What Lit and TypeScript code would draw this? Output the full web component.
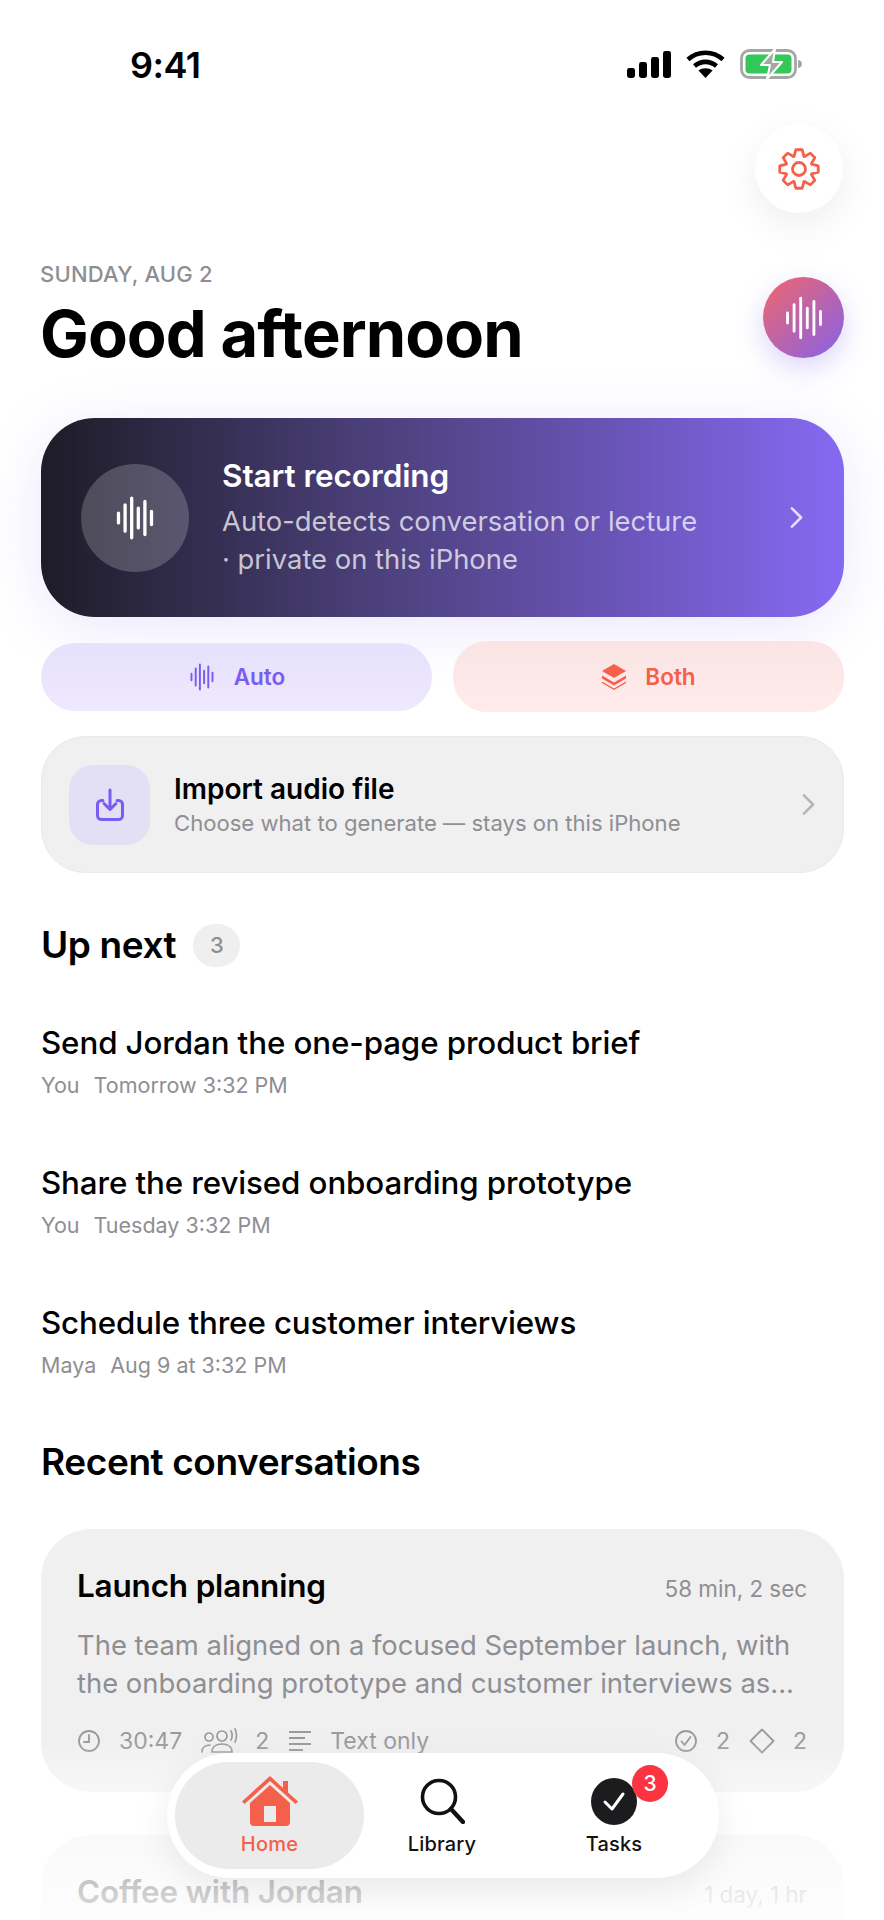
import { LitElement, html, css, svg } from 'lit';
import { customElement } from 'lit/decorators.js';

const wave = (size: number, stroke = 2) => html`
  <svg width=${size} height=${size} viewBox="0 0 40 40" fill="none" stroke="currentColor" stroke-width=${stroke} stroke-linecap="round">
    <path d="M5 15.500v9M11 8v24M17 2v36M23 11v18M29 5v30M35 14v12" />
  </svg>`;

const chevron = (w: number, h: number) => html`
  <svg width=${w} height=${h} viewBox="0 0 12 20" fill="none" stroke="currentColor" stroke-width="2.200" stroke-linecap="round" stroke-linejoin="round">
    <path d="M2 2l8 8-8 8" />
  </svg>`;

const UP_NEXT = [
  { title: 'Send Jordan the one-page product brief', who: 'You', when: 'Tomorrow 3:32 PM' },
  { title: 'Share the revised onboarding prototype', who: 'You', when: 'Tuesday 3:32 PM' },
  { title: 'Schedule three customer interviews', who: 'Maya', when: 'Aug 9 at 3:32 PM' },
];

@customElement('app-root')
export class AppRoot extends LitElement {
  static styles = css`
    :host {
      display: block;
      position: relative;
      width: 884px;
      height: 1920px;
      overflow: hidden;
      background: #fff;
      color: #000;
      font-family: Inter, "Noto Sans", sans-serif;
    }
    .status {
      height: 124px;
      display: flex;
      justify-content: space-between;
      align-items: flex-start;
      padding: 47px 82px 0 130px;
      box-sizing: border-box;
    }
    .time { font-size: 36px; font-weight: 600; line-height: 36px; letter-spacing: -0.5px; }
    .status-icons { display: flex; align-items: center; gap: 15px; padding-top: 2px; }
    .top { display: flex; justify-content: flex-end; padding: 0 41px; }
    .gear {
      width: 88px;
      height: 89px;
      border-radius: 50%;
      background: #fff;
      display: flex;
      align-items: center;
      justify-content: center;
      color: #f4604a;
      box-shadow: 0 12px 40px rgba(0, 0, 0, 0.07);
    }
    .hero {
      display: flex;
      justify-content: space-between;
      align-items: flex-start;
      padding: 48px 40px 0 40px;
      height: 205px;
      box-sizing: border-box;
    }
    .date { font-size: 22px; font-weight: 500; color: #8e8e93; line-height: 26px; letter-spacing: 0.2px; }
    h1 { margin: 9px 0 0; font-size: 65px; font-weight: 700; line-height: 76px; letter-spacing: -0.9px; }
    .mic {
      width: 81px;
      height: 81px;
      margin-top: 16px;
      border-radius: 50%;
      background: linear-gradient(135deg, #f1666a, #8562ea);
      display: flex;
      align-items: center;
      justify-content: center;
      color: #fff;
      box-shadow: 0 10px 28px rgba(130, 100, 235, 0.28);
    }
    .content { padding: 0 40px 0 41px; }
    .record {
      height: 199px;
      border-radius: 54px;
      background: linear-gradient(90deg, #1d1c27 0%, #4a3f78 40%, #6a55b8 72%, #8669f2 100%);
      box-shadow: 0 10px 60px rgba(130, 100, 240, 0.16);
      display: flex;
      align-items: center;
      padding: 0 40px;
      color: #fff;
      box-sizing: border-box;
    }
    .rec-circle {
      width: 108px;
      height: 108px;
      border-radius: 50%;
      background: rgba(255, 255, 255, 0.2);
      display: flex;
      align-items: center;
      justify-content: center;
      flex: none;
    }
    .rec-text { flex: 1; margin-left: 33px; }
    .rec-title { font-size: 31.5px; font-weight: 600; line-height: 38px; margin-bottom: 7px; letter-spacing: -0.1px; }
    .rec-sub { font-size: 27.4px; line-height: 38px; color: rgba(255, 255, 255, 0.72); width: 482px; }
    .rec-chev { color: rgba(255, 255, 255, 0.8); display: flex; }
    .modes { display: grid; grid-template-columns: 391px 391px; gap: 21px; margin-top: 24px; align-items: center; }
    .mode {
      border-radius: 34px;
      display: flex;
      align-items: center;
      justify-content: center;
      gap: 18px;
      font-size: 22.5px;
      font-weight: 600;
    }
    .auto { height: 68px; background: linear-gradient(180deg, #e6e1fc, #eee9fd); color: #7a5df0; }
    .both { height: 71px; background: linear-gradient(180deg, #fae4e5, #feecea); color: #f4604a; }
    .import {
      margin-top: 24px;
      height: 137px;
      border-radius: 44px;
      background: #f0f0f0;
      border: 1px solid #eaeaea;
      box-sizing: border-box;
      display: flex;
      align-items: center;
      padding: 0 27px 0 27px;
    }
    .imp-icon {
      width: 81px;
      height: 80px;
      border-radius: 24px;
      background: #e3e0f5;
      color: #7a5df0;
      display: flex;
      align-items: center;
      justify-content: center;
      flex: none;
    }
    .imp-text { flex: 1; margin-left: 24px; }
    .imp-title { font-size: 28px; font-weight: 600; line-height: 34px; }
    .imp-sub { font-size: 22.1px; line-height: 30px; color: #8e8e93; margin-top: 2px; }
    .imp-chev { color: #b5b5b8; display: flex; }
    .section { display: flex; align-items: center; gap: 17px; margin-top: 50px; height: 44px; }
    h2 { margin: 0; font-size: 37px; font-weight: 600; line-height: 44px; letter-spacing: -0.4px; }
    .count {
      width: 47px;
      height: 43px;
      border-radius: 22px;
      background: #efefef;
      color: #8e8e93;
      font-size: 22px;
      font-weight: 500;
      display: flex;
      align-items: center;
      justify-content: center;
    }
    .rows { margin-top: 56px; display: grid; row-gap: 64px; }
    .row-title { font-size: 31.3px; font-weight: 500; line-height: 40px; letter-spacing: -0.1px; }
    .row-sub { display: flex; gap: 14px; font-size: 21.5px; line-height: 28px; color: #8e8e93; margin-top: 8px; }
    .recent { margin-top: 61px; }
    .card {
      margin-top: 45px;
      height: 263px;
      border-radius: 50px;
      background: #f0f0f0;
      padding: 36px 37px 0 36px;
      box-sizing: border-box;
    }
    .card-head { display: flex; justify-content: space-between; align-items: baseline; }
    .card-title { font-size: 31.5px; font-weight: 600; line-height: 42px; letter-spacing: -0.2px; }
    .card-len { font-size: 22.4px; color: #8e8e93; }
    .card-body { font-size: 27.4px; line-height: 38px; color: #8e8e93; margin-top: 19px; }
    .card-foot {
      display: flex;
      align-items: center;
      gap: 19px;
      margin-top: 25px;
      font-size: 23px;
      line-height: 28px;
      color: #9a9a9e;
    }
    .stat { display: inline-flex; align-items: center; gap: 18px; }
    .stat.tight { gap: 16px; }
    .stat svg { flex: none; }
    .spacer { flex: 1; }
    .next-card { margin-top: 43px; }
    .fade {
      position: absolute;
      left: 0;
      right: 0;
      top: 1740px;
      height: 180px;
      background: linear-gradient(180deg, rgba(255, 255, 255, 0) 0%, rgba(255, 255, 255, 0.5) 28%, rgba(255, 255, 255, 0.8) 84%, rgba(255, 255, 255, 0.88) 100%);
      pointer-events: none;
    }
    .nav {
      position: absolute;
      left: 167px;
      top: 1753px;
      width: 552px;
      height: 125px;
      border-radius: 63px;
      background: #fff;
      box-shadow: 0 10px 36px rgba(0, 0, 0, 0.08);
    }
    .nav-inner { display: grid; grid-template-columns: 189px 156px 188px; height: 100%; padding-left: 8px; box-sizing: border-box; align-items: center; }
    .tab {
      height: 107px;
      display: flex;
      flex-direction: column;
      align-items: center;
      justify-content: flex-start;
      padding-top: 16px;
      box-sizing: border-box;
      font-size: 20px;
      font-weight: 500;
      color: #111;
      position: relative;
    }
    .tab svg { display: block; }
    .tab .label { position: absolute; top: 70px; line-height: 24px; letter-spacing: 0.2px; }
    .tab.active { background: #ebebeb; border-radius: 54px; color: #f4604a; padding-top: 14px; }
    .tab-check { position: relative; width: 46px; height: 47px; }
    .badge {
      position: absolute;
      left: 41px;
      top: -13px;
      width: 36px;
      height: 37px;
      border-radius: 50%;
      background: #fb3441;
      color: #fff;
      font-size: 21px;
      font-weight: 500;
      display: flex;
      align-items: center;
      justify-content: center;
    }
  `;

  private statusIcons() {
    return html`
      <div class="status-icons">
        <svg width="44" height="27" viewBox="0 0 44 27" fill="#000">
          <rect x="0" y="17" width="8" height="10" rx="2.400" />
          <rect x="12" y="11" width="8" height="16" rx="2.400" />
          <rect x="24" y="6" width="8" height="21" rx="2.400" />
          <rect x="36" y="0" width="8" height="27" rx="2.400" />
        </svg>
        <svg width="39" height="28" viewBox="0 0 39 28" fill="none" stroke="#000" stroke-width="4.600">
          <path d="M2 9.500C12 .5 27 .5 37 9.500" />
          <path d="M8.500 16c6.400-5.500 15.600-5.500 22 0" />
          <path d="M19.500 28l-7-7.500c4-3 10-3 14 0z" fill="#000" stroke="none" />
        </svg>
        <svg width="62" height="30" viewBox="0 0 62 30" fill="none">
          <rect x="1.500" y="1.500" width="54" height="27" rx="8" stroke="#a6a6a6" stroke-width="2.800" />
          <rect x="5.500" y="5.500" width="46" height="19" rx="4" fill="#34c759" />
          <path d="M58 11v8c2.200 0 4-2 4-4s-1.800-4-4-4z" fill="#a6a6a6" />
          <path d="M35 0L21 16h9l-3 14 15-17h-9z" fill="#a6a6a6" stroke="#fff" stroke-width="2" stroke-linejoin="round" />
        </svg>
      </div>`;
  }

  private gear() {
    const n = 8;
    const cx = 22;
    const cy = 22;
    // outline built from alternating outer and inner radii
    let d = '';
    for (let i = 0; i < n; i++) {
      const a = (i / n) * Math.PI * 2 - Math.PI / 2;
      const s = Math.PI / n;
      const pts = [
        [13.5, a - s * 0.95],
        [19.5, a - s * 0.42],
        [19.5, a + s * 0.42],
        [13.5, a + s * 0.95],
      ];
      for (const [r, t] of pts) {
        const x = (cx + r * Math.cos(t)).toFixed(2);
        const y = (cy + r * Math.sin(t)).toFixed(2);
        d += `${d ? 'L' : 'M'}${x} ${y}`;
      }
    }
    return html`
      <svg width="44" height="44" viewBox="0 0 44 44" fill="none" stroke="currentColor" stroke-width="2.800" stroke-linejoin="round">
        ${svg`<path d="${d}Z" />`}
        <circle cx="22" cy="22" r="6.500" />
      </svg>`;
  }

  render() {
    return html`
      <div class="status">
        <div class="time">9:41</div>
        ${this.statusIcons()}
      </div>
      <div class="top"><div class="gear">${this.gear()}</div></div>
      <div class="hero">
        <div>
          <div class="date">SUNDAY, AUG 2</div>
          <h1>Good afternoon</h1>
        </div>
        <div class="mic">${wave(44, 2.6)}</div>
      </div>
      <div class="content">
        <div class="record">
          <div class="rec-circle">${wave(44, 3)}</div>
          <div class="rec-text">
            <div class="rec-title">Start recording</div>
            <div class="rec-sub">Auto-detects conversation or lecture · private on this iPhone</div>
          </div>
          <div class="rec-chev">${chevron(15, 23)}</div>
        </div>
        <div class="modes">
          <div class="mode auto">${wave(28, 2.8)}<span>Auto</span></div>
          <div class="mode both">
            <svg width="26" height="26" viewBox="0 0 26 26" fill="currentColor">
              <path d="M13 0l12 7-12 7L1 7z" />
              <path d="M1 11.500l12 7 12-7v3l-12 7-12-7z" />
              <path d="M1 17.500l12 7 12-7v1.500l-12 7-12-7z" />
            </svg>
            <span>Both</span>
          </div>
        </div>
        <div class="import">
          <div class="imp-icon">
            <svg width="30" height="34" viewBox="0 0 30 34" fill="none" stroke="currentColor" stroke-width="3" stroke-linecap="round" stroke-linejoin="round">
              <path d="M8 12.500H6.500a4 4 0 0 0-4 4v11a4 4 0 0 0 4 4h17a4 4 0 0 0 4-4v-11a4 4 0 0 0-4-4H22" />
              <path d="M15 2v19M9 15.500l6 6 6-6" />
            </svg>
          </div>
          <div class="imp-text">
            <div class="imp-title">Import audio file</div>
            <div class="imp-sub">Choose what to generate — stays on this iPhone</div>
          </div>
          <div class="imp-chev">${chevron(15, 23)}</div>
        </div>

        <div class="section"><h2>Up next</h2><div class="count">3</div></div>
        <div class="rows">
          ${UP_NEXT.map(
            (r) => html`
              <div>
                <div class="row-title">${r.title}</div>
                <div class="row-sub"><span>${r.who}</span><span>${r.when}</span></div>
              </div>`,
          )}
        </div>

        <div class="section recent"><h2>Recent conversations</h2></div>
        <div class="card">
          <div class="card-head">
            <div class="card-title">Launch planning</div>
            <div class="card-len">58 min, 2 sec</div>
          </div>
          <div class="card-body">The team aligned on a focused September launch, with the onboarding prototype and customer interviews as...</div>
          <div class="card-foot">
            <span class="stat">
              <svg width="24" height="24" viewBox="0 0 24 24" fill="none" stroke="currentColor" stroke-width="1.800" stroke-linecap="round">
                <circle cx="12" cy="12" r="10" /><path d="M12 6v7H7" />
              </svg>
              30:47
            </span>
            <span class="stat tight">
              <svg width="38" height="26" viewBox="0 0 38 26" fill="none" stroke="currentColor" stroke-width="1.700" stroke-linecap="round">
                <circle cx="8" cy="9" r="4" /><circle cx="21" cy="8" r="5" />
                <path d="M1 24c0-5 4-7 8-7M11 24c0-5 4-8 10-8s10 3 10 8z" />
                <path d="M30 3c1.500 2 1.500 7 0 9M34 1c2 3 2 10 0 13" />
              </svg>
              2
            </span>
            <span class="stat">
              <svg width="24" height="20" viewBox="0 0 24 20" fill="none" stroke="currentColor" stroke-width="2">
                <path d="M1 1h22M1 7h16M1 13h22M1 19h14" />
              </svg>
              Text only
            </span>
            <span class="spacer"></span>
            <span class="stat">
              <svg width="24" height="24" viewBox="0 0 24 24" fill="none" stroke="currentColor" stroke-width="1.800" stroke-linecap="round" stroke-linejoin="round">
                <circle cx="12" cy="12" r="10" /><path d="M7.500 12.500l3 3.500 6-8" />
              </svg>
              2
            </span>
            <span class="stat">
              <svg width="26" height="26" viewBox="0 0 26 26" fill="none" stroke="currentColor" stroke-width="1.800" stroke-linejoin="round">
                <path d="M13 1.500L24.500 13 13 24.500 1.500 13z" />
              </svg>
              2
            </span>
          </div>
        </div>
        <div class="card next-card">
          <div class="card-head">
            <div class="card-title">Coffee with Jordan</div>
            <div class="card-len">1 day, 1 hr</div>
          </div>
        </div>
      </div>
      <div class="fade"></div>
      <nav class="nav">
        <div class="nav-inner">
          <div class="tab active">
            <svg width="56" height="50" viewBox="0 0 56 50" fill="currentColor">
              <path d="M28 0L0 25.500l2.500 2.500L28 5l25.500 23 2.500-2.500-10-9V5h-5v7z" />
              <path d="M28 9L8 27v19a4 4 0 0 0 4 4h32a4 4 0 0 0 4-4V27zM22 30h12v16H22z" fill-rule="evenodd" />
            </svg>
            <span class="label">Home</span>
          </div>
          <div class="tab">
            <svg width="46" height="46" viewBox="0 0 46 46" fill="none" stroke="currentColor" stroke-width="3.600" stroke-linecap="round">
              <circle cx="20" cy="19" r="16.500" /><path d="M32 31l12 13" stroke-width="4.400" />
            </svg>
            <span class="label">Library</span>
          </div>
          <div class="tab">
            <div class="tab-check">
              <svg width="46" height="47" viewBox="0 0 46 47">
                <ellipse cx="23" cy="23.500" rx="23" ry="23.500" fill="#1c1c1e" />
                <path d="M14 24l7 7 11-15" fill="none" stroke="#fff" stroke-width="3" stroke-linecap="round" stroke-linejoin="round" />
              </svg>
              <div class="badge">3</div>
            </div>
            <span class="label">Tasks</span>
          </div>
        </div>
      </nav>
    `;
  }
}
